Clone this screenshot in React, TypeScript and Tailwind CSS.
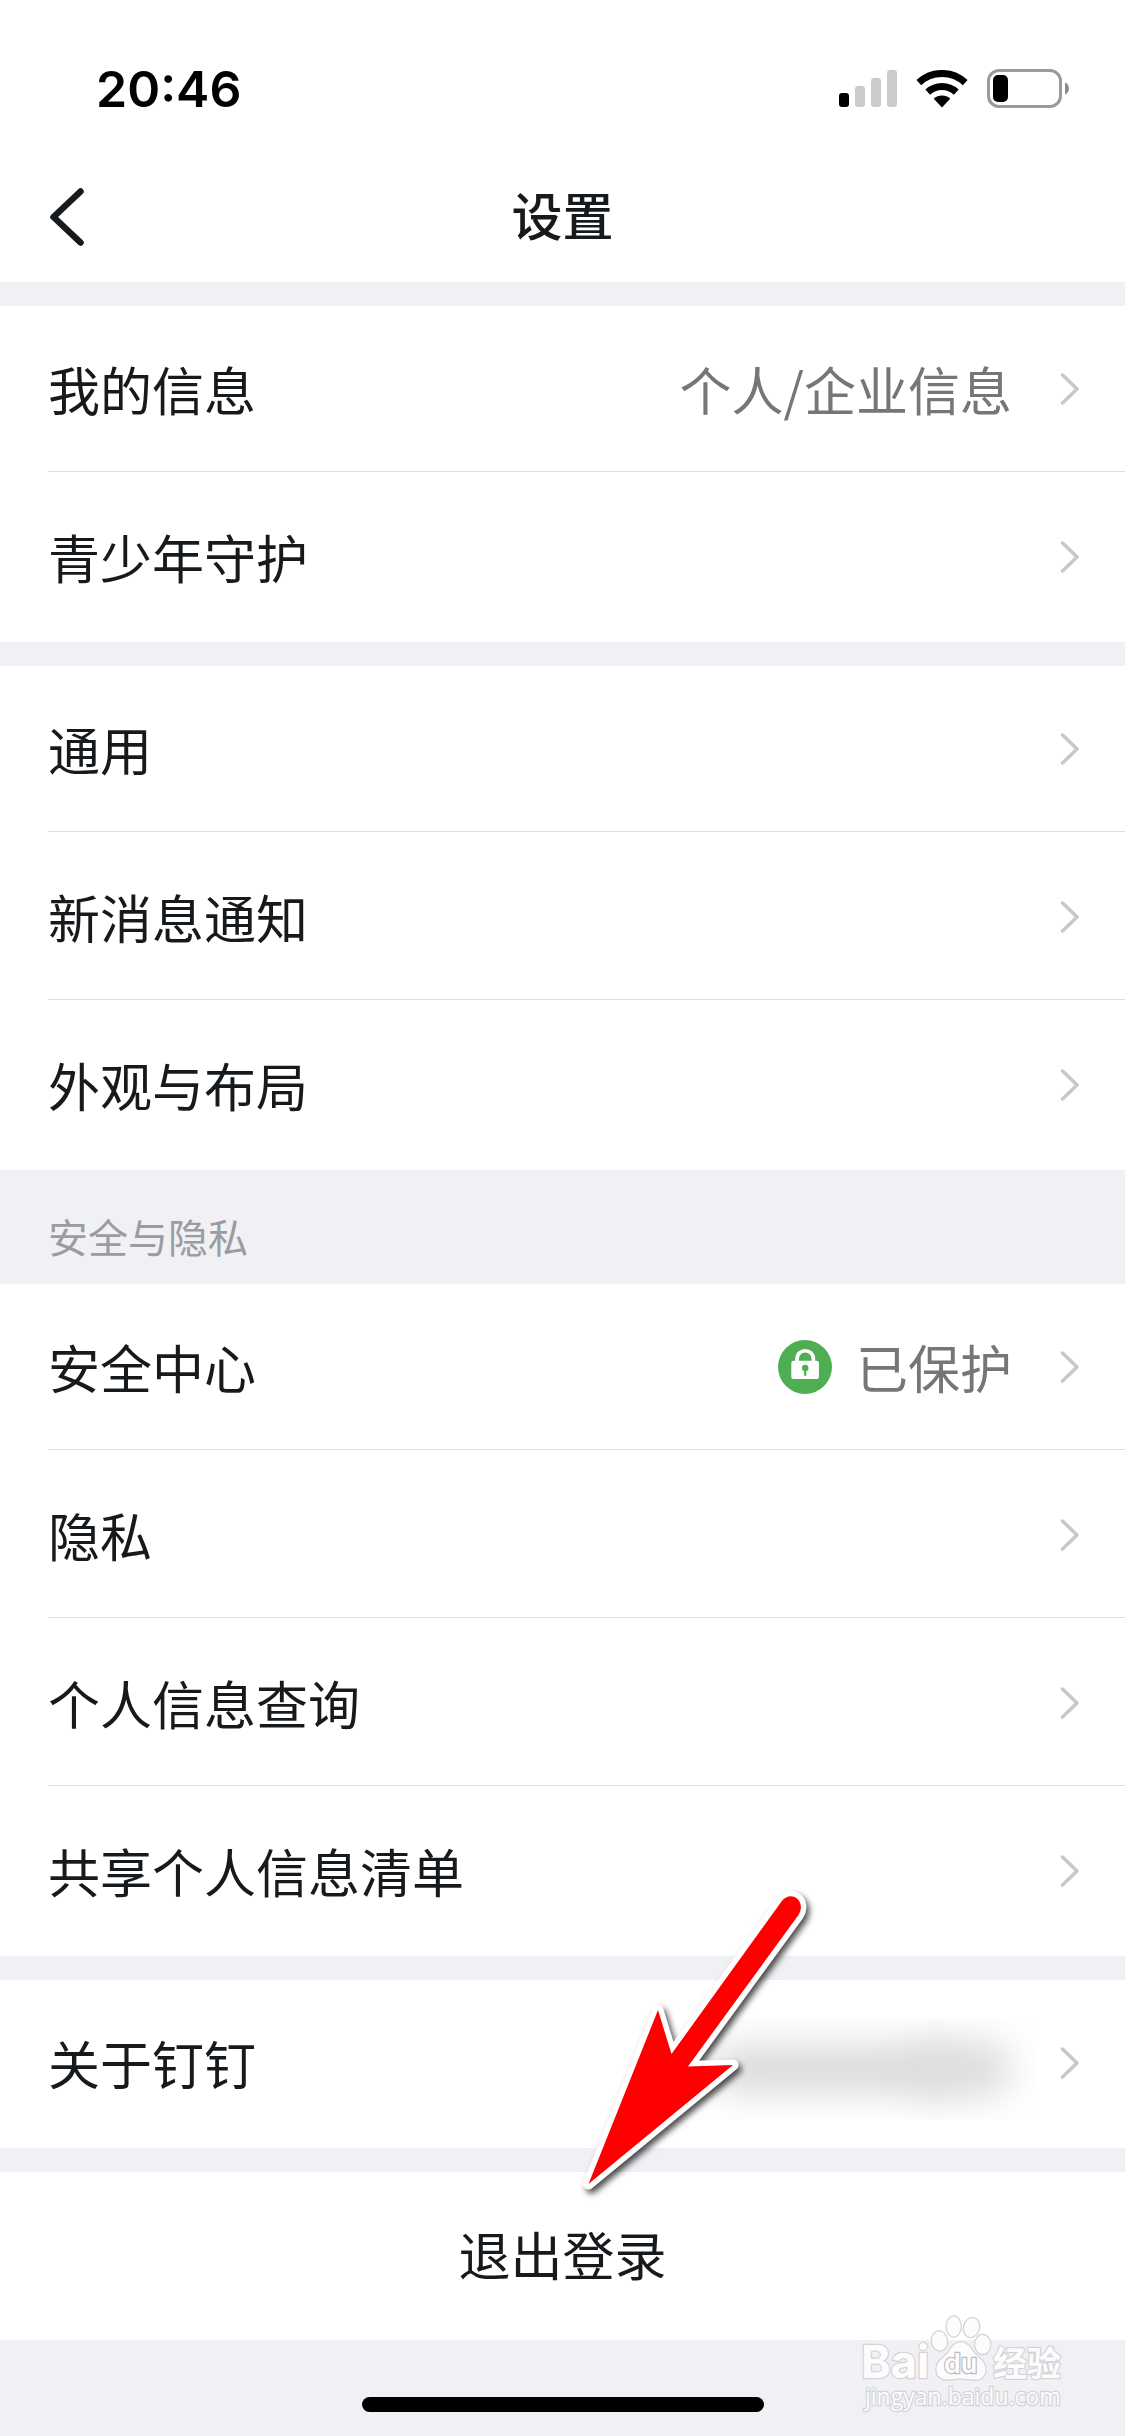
import type { ReactNode } from "react";

type RowProps = {
  label: string;
  href: string;
  last?: boolean;
  children?: ReactNode;
};

function SignalIcon() {
  return (
    <svg width="58" height="38" viewBox="0 0 58 38" aria-hidden="true">
      <rect x="0" y="23" width="10" height="14" rx="3" fill="#000" />
      <rect x="16" y="16" width="10" height="21" rx="3" fill="#cbcbcb" />
      <rect x="32" y="8" width="10" height="29" rx="3" fill="#cbcbcb" />
      <rect x="48" y="0" width="10" height="37" rx="3" fill="#cbcbcb" />
    </svg>
  );
}

function WifiIcon() {
  return (
    <svg width="52" height="38" viewBox="0 0 52 38" fill="none" aria-hidden="true">
      <path d="M2.8 12.6A34 34 0 0 1 49.2 12.6" stroke="#000" strokeWidth="7" />
      <path d="M11.7 22.1A21 21 0 0 1 40.3 22.1" stroke="#000" strokeWidth="7" />
      <path d="M26 37.5 17.8 28.7A12 12 0 0 1 34.2 28.7Z" fill="#000" />
    </svg>
  );
}

function BatteryIcon() {
  return (
    <svg width="82" height="40" viewBox="0 0 82 40" fill="none" aria-hidden="true">
      <rect x="1.5" y="1.5" width="72" height="36" rx="10.5" stroke="#9a9a9a" strokeWidth="3" />
      <rect x="6" y="6" width="15" height="27" rx="5" fill="#000" />
      <path d="M78 13.5c5.3 2.2 5.3 9.8 0 12z" fill="#8a8a8a" />
    </svg>
  );
}

function Chevron() {
  return (
    <svg width="20" height="32" viewBox="0 0 20 32" fill="none" className="shrink-0" aria-hidden="true">
      <path
        d="M2.5 2 17 16 2.5 30"
        stroke="#c8c8c8"
        strokeWidth="3.5"
        strokeLinecap="round"
        strokeLinejoin="round"
      />
    </svg>
  );
}

function LockBadge() {
  return (
    <svg width="54" height="54" viewBox="0 0 54 54" fill="none" aria-hidden="true">
      <circle cx="27" cy="27" r="27" fill="#4fae52" />
      <path d="M19 23v-4c0-11 16.4-11 16.4 0v4" stroke="#fff" strokeWidth="3.6" />
      <rect x="13.3" y="20.8" width="27.6" height="18.3" rx="2.2" fill="#fff" />
      <circle cx="27.2" cy="28" r="3.3" fill="#4fae52" />
      <path d="M27.2 28v7" stroke="#4fae52" strokeWidth="2.2" strokeLinecap="round" />
    </svg>
  );
}

function PointerArrow() {
  return (
    <svg
      width="260"
      height="330"
      viewBox="560 1880 260 330"
      className="pointer-events-none absolute -top-[100px] right-[305px] z-10 drop-shadow-[3px_4px_3px_rgba(0,0,0,0.7)]"
      aria-hidden="true"
    >
      <path
        d="M781.5 1901.5 671.5 2054 658 2010 588.5 2184 733 2065 688 2066.5 798.5 1915C807 1901 791 1889 781.5 1901.5Z"
        fill="#f00"
        stroke="#fff"
        strokeWidth="11"
        strokeLinejoin="round"
        paintOrder="stroke"
      />
    </svg>
  );
}

function Watermark() {
  return (
    <svg
      width="210"
      height="106"
      viewBox="0 0 210 106"
      className="pointer-events-none absolute right-[55px] bottom-5 overflow-visible"
      fill="#fcfcfd"
      stroke="#d4d4d8"
      strokeWidth="2.5"
      paintOrder="stroke"
      aria-hidden="true"
    >
      <g>
        <ellipse cx="79.5" cy="31" rx="7.5" ry="9.5" transform="rotate(-8 79.5 31)" />
        <ellipse cx="93.7" cy="16.5" rx="7" ry="10" />
        <ellipse cx="111.5" cy="17.5" rx="7.5" ry="9.5" transform="rotate(14 111.5 17.5)" />
        <ellipse cx="122.7" cy="34.5" rx="7.5" ry="9.5" />
        <path d="M100.5 32.5c8 0 10 6 14 11 5 5 11 8 11 16 0 7-5 11-12 10-5 0-8-1-13-1s-8 1-13 1c-7 0-11-4-11-10 0-8 6-11 11-16 4-5 6-11 13-11z" />
      </g>
      <text x="1" y="68" className="font-['Inter','Liberation_Sans',sans-serif] text-[45px] font-bold">
        Bai
      </text>
      <text
        x="84"
        y="63"
        className="font-['Inter','Liberation_Sans',sans-serif] text-[27px] font-semibold"
        stroke="#bdbdc2"
      >
        du
      </text>
      <text x="133" y="66" className="font-['Noto_Sans_CJK_SC',sans-serif] text-[34px] font-bold">
        经验
      </text>
      <text x="5" y="95" className="font-['Open_Sans',sans-serif] text-[23px]">
        jingyan.baidu.com
      </text>
    </svg>
  );
}

function Row({ label, href, last, children }: RowProps) {
  return (
    <li className="bg-white pb-[2px] pl-12">
      <a
        href={href}
        className={`flex h-[166px] items-center border-b pr-[45px] ${last ? "border-transparent" : "border-[#e0e0e1]"}`}
      >
        <span className="pt-px text-[52px] leading-none">{label}</span>
        <span className="mr-12 ml-auto flex items-center pt-px text-[52px] leading-none text-[#747678]">
          {children}
        </span>
        <Chevron />
      </a>
    </li>
  );
}

export default function App() {
  return (
    <div className="flex min-h-screen flex-col bg-[#f0f0f5] font-['Noto_Sans_CJK_SC',sans-serif] text-[#171a1d]">
      <header className="bg-white">
        <div className="flex items-center justify-between pt-[62px] pr-14 pb-9 pl-24">
          <time className="font-['Inter',sans-serif] text-[50px] leading-[54px] font-semibold text-black">
            20:46
          </time>
          <div className="flex items-center gap-[19px]">
            <SignalIcon />
            <WifiIcon />
            <BatteryIcon />
          </div>
        </div>
        <div className="grid h-[130px] grid-cols-[1fr_auto_1fr] items-center px-12">
          <button type="button" aria-label="返回" className="justify-self-start">
            <svg width="38" height="60" viewBox="0 0 38 60" fill="none" aria-hidden="true">
              <path
                d="M32.5 4.5 5.5 30 32.5 55.5"
                stroke="#171a1d"
                strokeWidth="6.5"
                strokeLinecap="round"
                strokeLinejoin="round"
              />
            </svg>
          </button>
          <h1 className="pb-1.5 text-[51px] leading-none font-medium">设置</h1>
        </div>
      </header>

      <main>
        <ul className="mt-6">
          <Row label="我的信息" href="#profile">
            个人/企业信息
          </Row>
          <Row label="青少年守护" href="#youth" last />
        </ul>

        <ul className="mt-6">
          <Row label="通用" href="#general" />
          <Row label="新消息通知" href="#notifications" />
          <Row label="外观与布局" href="#appearance" last />
        </ul>

        <section>
          <h2 className="pt-[46px] pb-7 pl-12 text-[40px] leading-[40px] text-[#9b9ca0]">安全与隐私</h2>
          <ul>
            <Row label="安全中心" href="#security">
              <LockBadge />
              <span className="ml-6">已保护</span>
            </Row>
            <Row label="隐私" href="#privacy" />
            <Row label="个人信息查询" href="#query" />
            <Row label="共享个人信息清单" href="#shared" last />
          </ul>
        </section>

        <div className="relative mt-6">
          <ul>
            <Row label="关于钉钉" href="#about" last>
              {/* version number is kept hidden */}
              <span className="mt-3 -mr-6 flex h-[102px] w-[360px] items-center justify-end overflow-hidden pr-6">
                <span className="h-12 w-[240px] rounded-full bg-[#dadada] blur-[18px]" />
                <span className="-ml-10 h-14 w-[100px] rounded-full bg-[#dcdcdc] blur-[18px]" />
              </span>
            </Row>
          </ul>
          <PointerArrow />
        </div>

        <button
          type="button"
          className="mt-6 flex h-[168px] w-full items-center justify-center bg-white pb-1 text-[52px] leading-none"
        >
          退出登录
        </button>
      </main>

      <footer className="relative flex h-24 items-end justify-center pb-6">
        <div className="h-[15px] w-[402px] rounded-full bg-black" />
        <Watermark />
      </footer>
    </div>
  );
}
